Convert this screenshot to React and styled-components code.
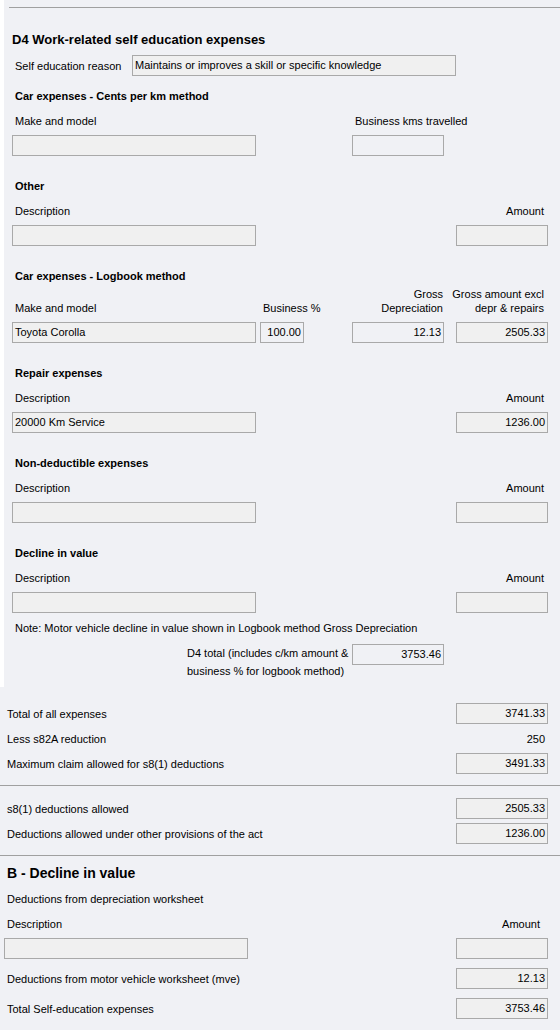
import React from 'react'
import styled, { createGlobalStyle } from 'styled-components'

const GlobalStyle = createGlobalStyle`
  body {
    margin: 0;
    background: #ffffff;
    font-family: "Liberation Sans", Arial, sans-serif;
    font-size: 11px;
    color: #000;
  }
  * { box-sizing: border-box; }
`

const sections = [
  {
    title: 'Car expenses - Cents per km method',
    labels: [
      { text: 'Make and model', col: 1 },
      { text: 'Business kms travelled', col: 3 },
    ],
    fields: [
      { col: 1, w: 244 },
      { col: 3, w: 92, plain: true },
    ],
  },
  {
    title: 'Other',
    labels: [
      { text: 'Description', col: 1 },
      { text: 'Amount', col: 4, right: true },
    ],
    fields: [
      { col: 1, w: 244 },
      { col: 4, w: 92 },
    ],
  },
  {
    title: 'Car expenses - Logbook method',
    tight: true,
    labels: [
      { text: 'Make and model', col: 1 },
      { text: 'Business %', col: 2 },
      { text: ['Gross', 'Depreciation'], col: 3, right: true, pad: 13 },
      { text: ['Gross amount excl', 'depr & repairs'], col: 4, right: true },
    ],
    fields: [
      { col: 1, w: 244, value: 'Toyota Corolla' },
      { col: 2, w: 44, value: '100.00', num: true, plain: true },
      { col: 3, w: 92, value: '12.13', num: true, plain: true },
      { col: 4, w: 92, value: '2505.33', num: true },
    ],
  },
  {
    title: 'Repair expenses',
    labels: [
      { text: 'Description', col: 1 },
      { text: 'Amount', col: 4, right: true },
    ],
    fields: [
      { col: 1, w: 244, value: '20000 Km Service' },
      { col: 4, w: 92, value: '1236.00', num: true },
    ],
  },
  {
    title: 'Non-deductible expenses',
    labels: [
      { text: 'Description', col: 1 },
      { text: 'Amount', col: 4, right: true },
    ],
    fields: [
      { col: 1, w: 244 },
      { col: 4, w: 92 },
    ],
  },
  {
    title: 'Decline in value',
    labels: [
      { text: 'Description', col: 1 },
      { text: 'Amount', col: 4, right: true },
    ],
    fields: [
      { col: 1, w: 244 },
      { col: 4, w: 92 },
    ],
  },
]

function App() {
  return (
    <>
      <GlobalStyle />
      <TopPanel>
        <Rule $inset={5} />
        <Title>D4 Work-related self education expenses</Title>
        <ReasonRow>
          <ReasonLabel>Self education reason</ReasonLabel>
          <Field $w={324}>Maintains or improves a skill or specific knowledge</Field>
        </ReasonRow>

        {sections.map((s, i) => (
          <Section key={s.title} $first={i === 0}>
            <SectionTitle>{s.title}</SectionTitle>
            <LabelRow $tight={s.tight}>
              {s.labels.map((l, j) => (
                <Label key={j} $col={l.col} $right={l.right} $pad={l.pad}>
                  {Array.isArray(l.text)
                    ? l.text.map((t) => <div key={t}>{t}</div>)
                    : l.text}
                </Label>
              ))}
            </LabelRow>
            <FieldRow>
              {s.fields.map((f, j) => (
                <Field key={j} $col={f.col} $w={f.w} $num={f.num} $plain={f.plain}>
                  {f.value}
                </Field>
              ))}
            </FieldRow>
          </Section>
        ))}

        <Note>Note: Motor vehicle decline in value shown in Logbook method Gross Depreciation</Note>
        <TotalRow>
          <TotalText>
            D4 total (includes c/km amount &amp;
            <br />
            business % for logbook method)
          </TotalText>
          <Field $w={92} $num $plain>3753.46</Field>
        </TotalRow>
      </TopPanel>

      <LowerPanel>
        <Block $top={16}>
          <SummaryRow>
            <span>Total of all expenses</span>
            <Field $w={92} $num>3741.33</Field>
          </SummaryRow>
          <SummaryRow>
            <span>Less s82A reduction</span>
            <PlainValue>250</PlainValue>
          </SummaryRow>
          <SummaryRow>
            <span>Maximum claim allowed for s8(1) deductions</span>
            <Field $w={92} $num>3491.33</Field>
          </SummaryRow>
        </Block>
        <Rule $gap={11} />
        <Block $top={12}>
          <SummaryRow>
            <span>s8(1) deductions allowed</span>
            <Field $w={92} $num>2505.33</Field>
          </SummaryRow>
          <SummaryRow>
            <span>Deductions allowed under other provisions of the act</span>
            <Field $w={92} $num>1236.00</Field>
          </SummaryRow>
        </Block>
        <Rule $gap={11} />
        <Block $top={7}>
          <BigTitle>B - Decline in value</BigTitle>
          <Line $top={9}>Deductions from depreciation worksheet</Line>
          <SplitLine $top={11}>
            <span>Description</span>
            <AmountLabel>Amount</AmountLabel>
          </SplitLine>
          <SummaryRow $top={7}>
            <Field $w={244} $shift={-3} />
            <Field $w={92} />
          </SummaryRow>
          <SummaryRow $top={9}>
            <span>Deductions from motor vehicle worksheet (mve)</span>
            <Field $w={92} $num>12.13</Field>
          </SummaryRow>
          <SummaryRow $top={9}>
            <span>Total Self-education expenses</span>
            <Field $w={92} $num>3753.46</Field>
          </SummaryRow>
        </Block>
      </LowerPanel>
    </>
  )
}

const pageBg = '#f0f1f5'

const TopPanel = styled.div`
  margin-left: 4px;
  background: ${pageBg};
  padding: 7px 0 7px 0;
`

const LowerPanel = styled.div`
  background: ${pageBg};
  padding-bottom: 40px;
`

const Rule = styled.div`
  height: 1px;
  background: #a0a0a0;
  margin-left: ${(p) => p.$inset || 0}px;
  margin-top: ${(p) => p.$gap || 0}px;
`

const Title = styled.div`
  font-size: 13px;
  font-weight: bold;
  line-height: 20px;
  margin: 22px 0 0 8px;
`

const ReasonRow = styled.div`
  display: flex;
  align-items: center;
  margin: 5px 0 0 8px;
`

const ReasonLabel = styled.div`
  width: 120px;
  padding-left: 3px;
`

const Field = styled.div`
  grid-column: ${(p) => p.$col || 'auto'};
  width: ${(p) => p.$w}px;
  height: 21px;
  margin-left: ${(p) => p.$shift || 0}px;
  border: 1px solid #a9a9a9;
  background: ${(p) => (p.$plain ? pageBg : '#f0f0f0')};
  padding: 0 2px 0 2px;
  line-height: 19px;
  font-size: 11px;
  text-align: ${(p) => (p.$num ? 'right' : 'left')};
  white-space: nowrap;
  overflow: hidden;
`

const Section = styled.div`
  margin-top: ${(p) => (p.$first ? 10 : 20)}px;
  padding-left: 8px;
`

const SectionTitle = styled.div`
  font-size: 11px;
  font-weight: bold;
  line-height: 20px;
  padding-left: 3px;
`

const Grid = styled.div`
  display: grid;
  grid-template-columns: 248px 92px 104px 92px;
`

const LabelRow = styled(Grid)`
  margin-top: ${(p) => (p.$tight ? 1 : 8)}px;
  line-height: 14px;
  align-items: end;
`

const Label = styled.div`
  grid-column: ${(p) => p.$col};
  white-space: nowrap;
  ${(p) =>
    p.$right
      ? `justify-self: end; text-align: right; margin-right: ${p.$pad ?? 4}px;`
      : 'padding-left: 3px;'}
`

const FieldRow = styled(Grid)`
  margin-top: 7px;
`

const Note = styled.div`
  margin-top: 8px;
  padding-left: 11px;
  line-height: 14px;
`

const TotalRow = styled.div`
  display: grid;
  grid-template-columns: 340px 92px;
  margin-top: 9px;
  padding-left: 8px;
  align-items: start;
`

const TotalText = styled.div`
  padding-left: 175px;
  line-height: 18px;
  white-space: nowrap;
`

const Block = styled.div`
  padding: ${(p) => p.$top || 0}px 12px 0 7px;
`

const SummaryRow = styled.div`
  display: flex;
  justify-content: space-between;
  align-items: center;
  height: 21px;
  margin-top: ${(p) => (p.$top === undefined ? 4 : p.$top)}px;

  &:first-child {
    margin-top: 0;
  }
`

const PlainValue = styled.span`
  padding-right: 3px;
`

const BigTitle = styled.div`
  font-size: 14px;
  font-weight: bold;
  line-height: 20px;
`

const Line = styled.div`
  margin-top: ${(p) => p.$top}px;
  line-height: 14px;
`

const SplitLine = styled(Line)`
  display: flex;
  justify-content: space-between;
`

const AmountLabel = styled.span`
  padding-right: 8px;
`

export default App
